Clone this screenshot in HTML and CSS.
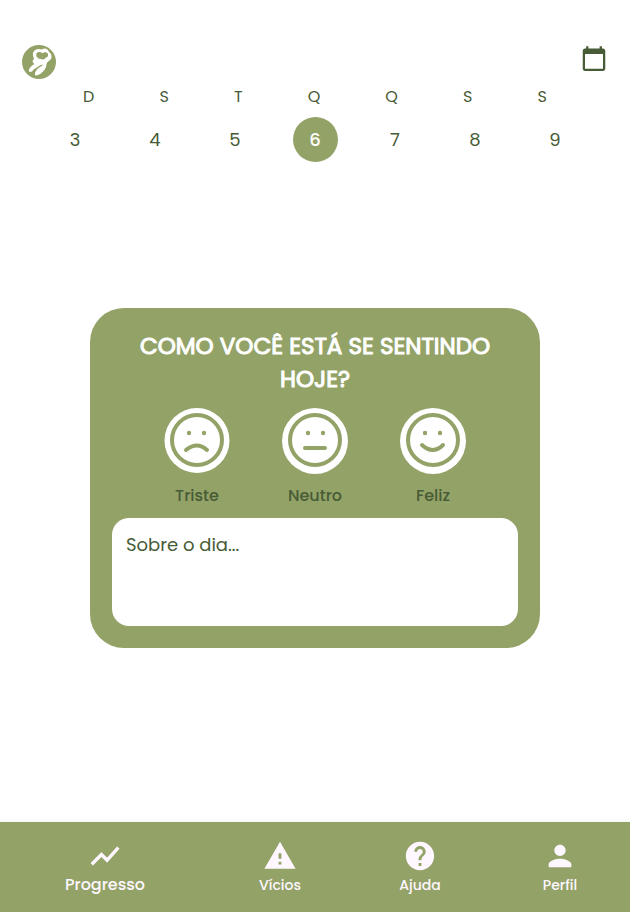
FILE: index.html
```html
<!DOCTYPE html>
<html lang="pt-BR">
<head>
<meta charset="utf-8">
<meta name="viewport" content="width=device-width, initial-scale=1">
<title>Diário</title>
<link rel="stylesheet" href="styles.css">
</head>
<body>
<header class="topbar">
  <a href="#" class="logo" aria-label="Início">
    <svg viewBox="0 0 34 34">
      <circle cx="17" cy="17" r="17" fill="#93a267"/>
      <path fill="#fff" d="M11 8C12 4.500 16 3 20 4.500C23 2.500 26 4 27 7C30 9 30.500 13 28 15C26.500 16.500 25 17 24.500 19C24.500 23 22 26 19.500 28C17 30 14 31 13 30C12.500 27 15 24 18 22C20 21 21 20 21 19.500C17 20 14.500 23 11.500 24.500C10.500 26.500 8.500 27.500 7 26.500C6.500 23.500 9 21 12.500 19C10 17.500 10 15.500 12 14C11.500 12 10.500 10 11 8Z"/>
      <g fill="#93a267">
        <ellipse cx="17.500" cy="10" rx="3.300" ry="3"/>
        <ellipse cx="23" cy="10" rx="3" ry="2.800"/>
        <path d="M15.500 13.500Q20 10.500 24 12.500Q22 15 20.500 14.500Q18 13.500 15.500 13.500Z"/>
      </g>
    </svg>
  </a>
  <button type="button" class="calendar" aria-label="Calendário">
    <svg viewBox="0 0 24 24"><path d="M20 3h-1V1h-2v2H7V1H5v2H4c-1.100 0-2 .9-2 2v16c0 1.100.9 2 2 2h16c1.100 0 2-.9 2-2V5c0-1.100-.9-2-2-2zm0 18H4V8h16v13z"/></svg>
  </button>
</header>
<section class="week">
  <div class="weekdays"><span>D</span><span>S</span><span>T</span><span>Q</span><span>Q</span><span>S</span><span>S</span></div>
  <div class="days">
    <button type="button">3</button>
    <button type="button">4</button>
    <button type="button">5</button>
    <button type="button" class="selected" aria-current="date">6</button>
    <button type="button">7</button>
    <button type="button">8</button>
    <button type="button">9</button>
  </div>
</section>
<main>
  <form class="card">
    <h1>COMO VOCÊ ESTÁ SE SENTINDO HOJE?</h1>
    <div class="moods">
      <button type="button" class="mood">
        <svg viewBox="0 0 66 66"><circle class="disc" cx="33" cy="32.500" r="32.500"/><circle class="line" cx="33" cy="32" r="25"/><circle class="dot" cx="25" cy="25" r="2.200"/><circle class="dot" cx="40" cy="25" r="2.200"/><path class="line" d="M22 42Q33 33 43 42"/></svg>
        <span>Triste</span>
      </button>
      <button type="button" class="mood">
        <svg viewBox="0 0 66 66"><circle class="disc" cx="33" cy="33" r="33"/><circle class="line" cx="33" cy="32" r="25"/><circle class="dot" cx="26" cy="25" r="2.200"/><circle class="dot" cx="41" cy="25" r="2.200"/><path class="line" d="M23 40H43"/></svg>
        <span>Neutro</span>
      </button>
      <button type="button" class="mood">
        <svg viewBox="0 0 66 66"><circle class="disc" cx="33" cy="33" r="33"/><circle class="line" cx="33" cy="32" r="25"/><circle class="dot" cx="25" cy="25" r="2.200"/><circle class="dot" cx="40" cy="25" r="2.200"/><path class="line" d="M22 37Q33 47 43 37"/></svg>
        <span>Feliz</span>
      </button>
    </div>
    <textarea aria-label="Sobre o dia" placeholder="Sobre o dia..."></textarea>
  </form>
</main>
<nav class="tabs">
  <a href="#" class="active" aria-current="page">
    <svg viewBox="0 0 24 24"><path stroke="currentColor" stroke-width=".5" d="M3.500 18.490l6-6.010 4 4L22 6.920l-1.410-1.410-7.090 7.970-4-4L2 16.990z"/></svg>
    <span>Progresso</span>
  </a>
  <a href="#">
    <svg viewBox="0 0 24 24"><path d="M1 21h22L12 2 1 21zm12-3h-2v-2h2v2zm0-4h-2v-4h2v4z"/></svg>
    <span>Vícios</span>
  </a>
  <a href="#">
    <svg viewBox="0 0 24 24"><path d="M12 2C6.480 2 2 6.480 2 12s4.480 10 10 10 10-4.480 10-10S17.520 2 12 2zm1 17h-2v-2h2v2zm2.070-7.750l-.9.920C13.450 12.900 13 13.500 13 15h-2v-.5c0-1.100.45-2.100 1.170-2.830l1.240-1.260c.37-.36.59-.86.59-1.410 0-1.100-.9-2-2-2s-2 .9-2 2H8c0-2.210 1.790-4 4-4s4 1.790 4 4c0 .88-.36 1.680-.93 2.250z"/></svg>
    <span>Ajuda</span>
  </a>
  <a href="#">
    <svg viewBox="0 0 24 24"><path d="M12 12c2.210 0 4-1.790 4-4s-1.790-4-4-4-4 1.790-4 4 1.790 4 4 4zm0 2c-2.670 0-8 1.340-8 4v2h16v-2c0-2.660-5.330-4-8-4z"/></svg>
    <span>Perfil</span>
  </a>
</nav>
</body>
</html>
```
FILE: styles.css
```css
:root {
  --green: #93a267;
  --dark: #475b36;
}
* { box-sizing: border-box; }
body {
  margin: 0;
  min-height: 100vh;
  display: flex;
  flex-direction: column;
  background: #fff;
  color: var(--dark);
  font-family: Poppins, Inter, sans-serif;
}
button {
  font: inherit;
  color: inherit;
  background: none;
  border: 0;
  padding: 0;
  cursor: pointer;
}
svg { display: block; fill: currentColor; }
.topbar {
  display: flex;
  justify-content: space-between;
  padding: 45px 22px 0;
}
.logo svg { width: 34px; height: 34px; }
.calendar { height: 27px; }
.calendar svg { width: 28px; height: 27px; }
.weekdays {
  display: flex;
  justify-content: space-between;
  padding: 6px 83px 0;
  font-size: 16px;
  line-height: 24px;
}
.days {
  display: grid;
  grid-template-columns: repeat(7, 1fr);
  justify-items: center;
  padding: 8px 35px 0;
}
.days button {
  width: 45px;
  height: 45px;
  border-radius: 50%;
  font-size: 18px;
}
.days .selected {
  background: var(--green);
  color: #fff;
  font-weight: 500;
}
main {
  flex: 1;
  padding: 146px 90px 40px;
}
.card {
  max-width: 450px;
  margin: 0 auto;
  padding: 22px;
  border-radius: 34px;
  background: var(--green);
}
h1 {
  margin: 0;
  padding: 0 20px;
  color: #fff;
  font-size: 23px;
  line-height: 33px;
  font-weight: 400;
  -webkit-text-stroke: 1px #fff;
  text-align: center;
}
.moods {
  display: flex;
  justify-content: center;
  gap: 52px;
  padding: 12px 0 10px;
}
.mood {
  width: 66px;
  font-size: 16px;
  line-height: 24px;
  font-weight: 500;
}
.mood svg { width: 66px; height: 66px; margin-bottom: 10px; }
.disc { fill: #fff; }
.dot { fill: var(--green); }
.line {
  fill: none;
  stroke: var(--green);
  stroke-width: 4;
  stroke-linecap: round;
}
textarea {
  display: block;
  width: 100%;
  height: 108px;
  padding: 13px 14px;
  border: 0;
  border-radius: 17px;
  background: #fff;
  color: var(--dark);
  font: inherit;
  font-size: 18px;
  line-height: 27px;
  resize: none;
}
textarea::placeholder { color: var(--dark); opacity: 1; }
.tabs {
  display: flex;
  min-height: 90px;
  padding-top: 17px;
  background: var(--green);
  color: #fef7ff;
  box-shadow: 0 0 5px #0001;
}
.tabs a {
  flex: 2;
  display: flex;
  flex-direction: column;
  align-items: center;
  color: inherit;
  text-decoration: none;
  font-size: 14px;
  line-height: 24px;
  font-weight: 500;
}
.tabs .active { flex: 3; font-size: 16px; }
.tabs svg { width: 34px; height: 34px; }
```
